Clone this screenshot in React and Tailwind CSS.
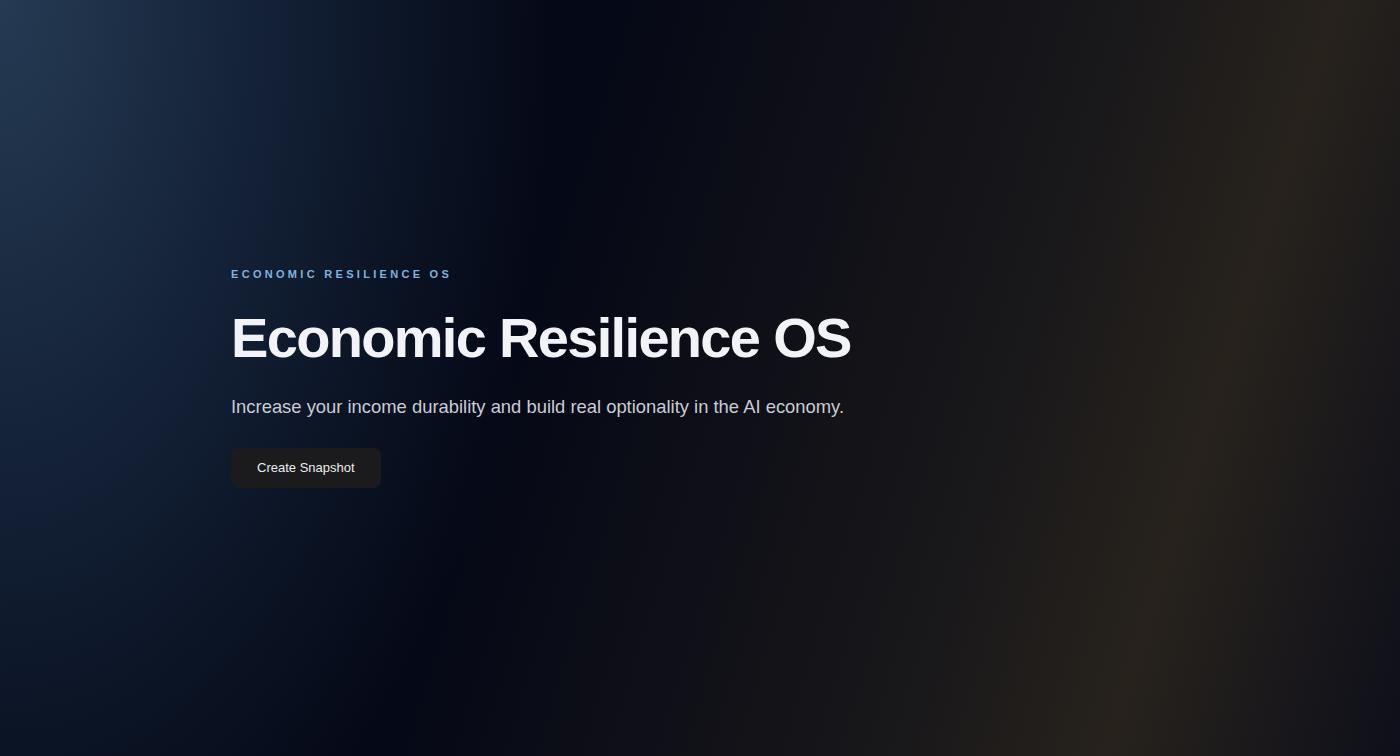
export default function App() {
  return (
    <div
      className="relative min-h-screen w-full overflow-hidden bg-[linear-gradient(107deg,#050816_0%,#050816_38%,#131318_60%,#18171a_68%,#27221c_82%,#0e0f1a_100%)]"
      style={{ fontFamily: '"Liberation Sans", Arial, Helvetica, sans-serif' }}
    >
      <div className="pointer-events-none absolute inset-0 bg-[radial-gradient(ellipse_560px_1000px_at_0_0,rgba(37,59,83,1)_0%,rgba(20,34,56,0.9)_50%,rgba(14,26,44,0.65)_75%,transparent_100%)]" />
      <div className="relative flex min-h-screen items-center">
        <div className="mx-auto w-full max-w-[1002px] px-8 pb-[2.4px]">
          <p className="text-[11px] leading-4 font-bold uppercase tracking-[0.3em] text-[#7fb2dd]">
            Economic Resilience OS
          </p>
          <h1 className="mt-[25px] text-[56px] leading-[1.1] font-bold tracking-[-0.03em] text-[#f1f3f7]">
            Economic Resilience OS
          </h1>
          <p className="mt-[24px] text-[18.4px] leading-7 text-[#c8ccd4]">
            Increase your income durability and build real optionality in the AI economy.
          </p>
          <button className="mt-[27px] h-10 rounded-lg bg-[#1b1b1d] px-[26px] text-[13px] text-[#ececec]">
            Create Snapshot
          </button>
        </div>
      </div>
    </div>
  );
}
